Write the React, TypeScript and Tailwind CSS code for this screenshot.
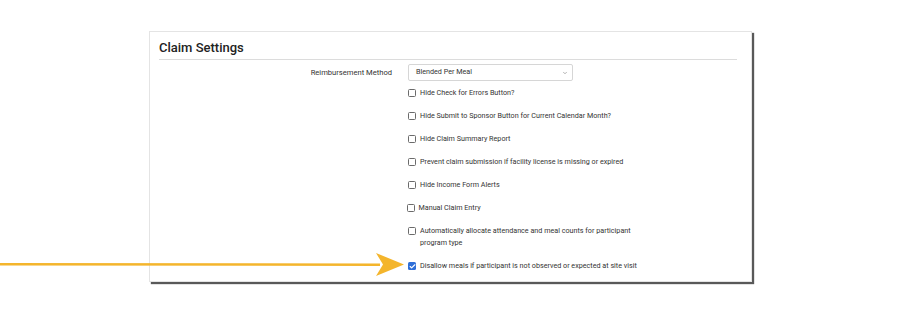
import { ChevronDown, Check } from "lucide-react";

const options = [
    { label: "Hide Check for Errors Button?", checked: false },
    { label: "Hide Submit to Sponsor Button for Current Calendar Month?", checked: false },
    { label: "Hide Claim Summary Report", checked: false },
    { label: "Prevent claim submission if facility license is missing or expired", checked: false },
    { label: "Hide Income Form Alerts", checked: false },
    { label: "Manual Claim Entry", checked: false, nudge: true },
    {
        label: "Automatically allocate attendance and meal counts for participant program type",
        checked: false,
        wrap: true,
    },
    { label: "Disallow meals if participant is not observed or expected at site visit", checked: true },
];

const Box = ({ checked }: { checked: boolean }) =>
    checked ? (
        <span className="mt-[2px] flex size-[8px] shrink-0 items-center justify-center rounded-[1.5px] bg-[#2f6fd8]">
            <Check className="size-[7px] text-white" strokeWidth={4} />
        </span>
    ) : (
        <span className="mt-[2px] size-[8px] shrink-0 rounded-[1.5px] border border-[#6b6b6b] bg-white" />
    );

const App = () => {
    return (
        <div className="relative h-[325px] w-[900px] overflow-hidden bg-white font-['Roboto',sans-serif] text-[#333]">
            <div className="ml-[149px] mt-[31px] h-[251px] w-[603px] overflow-hidden border border-[#e4e4e4] bg-white pl-[9px] pr-[14px] shadow-[2px_2px_1px_rgba(0,0,0,0.65)]">
                <h2 className="pt-[6px] text-[13px] font-medium leading-[20px] text-[#222]">Claim Settings</h2>
                <div className="mt-[1px] border-t border-[#dcdcdc]" />

                <div className="mt-[4px] grid grid-cols-[233px_1fr] gap-x-[16px]">
                    <div className="flex h-[17px] items-center justify-end text-[7.6px]">Reimbursement Method</div>
                    <div className="flex h-[17px] w-[165px] items-center justify-between rounded-[2px] border border-[#d6d6d6] pl-[7px] pr-[4px] text-[7.2px]">
                        <span>Blended Per Meal</span>
                        <ChevronDown className="size-[6px] text-[#666]" strokeWidth={2} />
                    </div>

                    <div />
                    <div className="mt-[6px] flex flex-col gap-[11px]">
                        {options.map((o) => (
                            <label
                                key={o.label}
                                className={`flex items-start gap-[4px] text-[7.2px] leading-[12px] ${o.nudge ? "-ml-[1.5px]" : ""}`}
                            >
                                <Box checked={o.checked} />
                                <span className={o.wrap ? "w-[222px]" : "whitespace-nowrap"}>{o.label}</span>
                            </label>
                        ))}
                    </div>
                </div>
            </div>

            <svg className="absolute left-0 top-[252px]" width="410" height="26" viewBox="0 0 410 26">
                <path d="M0 11 L380 11.5 L380 14 L0 13.5 Z" fill="#f4b52c" />
                <path d="M376 1 L404 12.5 L376 24 L383 12.5 Z" fill="#f4b52c" />
            </svg>
        </div>
    );
};

export default App;
